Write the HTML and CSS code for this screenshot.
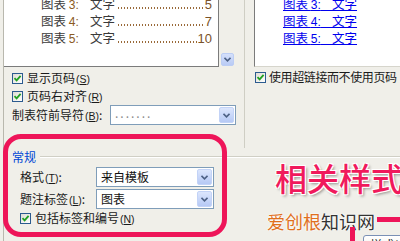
FILE: index.html
```html
<!DOCTYPE html>
<html lang="zh-CN">
<head>
<meta charset="utf-8">
<title>目录 - 图表目录</title>
<link rel="stylesheet" href="styles.css">
</head>
<body>
<div class="dialog">
  <div class="top">
    <div class="left-col">
      <div class="print-row">
        <div class="print-preview">
          <div class="lines">
            <div class="toc-line"><span class="cap">图表 <i>3:</i>&nbsp;&nbsp;&nbsp;&nbsp;文字</span><span class="dots"></span><span class="pg">5</span></div>
            <div class="toc-line"><span class="cap">图表 <i>4:</i>&nbsp;&nbsp;&nbsp;&nbsp;文字</span><span class="dots"></span><span class="pg">7</span></div>
            <div class="toc-line"><span class="cap">图表 <i>5:</i>&nbsp;&nbsp;&nbsp;&nbsp;文字</span><span class="dots"></span><span class="pg">10</span></div>
          </div>
        </div>
        <div class="vscroll">
          <div class="scroll-btn"><svg width="7" height="5" viewBox="0 0 7 5"><path d="M0.5 0.8 L3.5 3.8 L6.5 0.8" fill="none" stroke="#4d6185" stroke-width="1.6"/></svg></div>
        </div>
      </div>
      <div class="chk-row first"><span class="chk"><svg width="9" height="9" viewBox="0 0 9 9"><path d="M1.5 4.2 L3.6 6.4 L7.6 1.8" fill="none" stroke="#21a121" stroke-width="1.8"/></svg></span><span>显示页码<small>(<u>S</u>)</small></span></div>
      <div class="chk-row"><span class="chk"><svg width="9" height="9" viewBox="0 0 9 9"><path d="M1.5 4.2 L3.6 6.4 L7.6 1.8" fill="none" stroke="#21a121" stroke-width="1.8"/></svg></span><span>页码右对齐<small>(<u>R</u>)</small></span></div>
      <div class="field-row leader">
        <span class="lbl">制表符前导符<small>(<u>B</u>)</small>:</span>
        <div class="combo wide"><span class="val dotted">.......</span><span class="combo-btn"><svg width="7" height="5" viewBox="0 0 7 5"><path d="M0.5 0.8 L3.5 3.8 L6.5 0.8" fill="none" stroke="#4d6185" stroke-width="1.6"/></svg></span></div>
      </div>
    </div>
    <div class="right-col">
      <div class="web-preview">
        <div class="lines">
          <div class="web-line"><a>图表 <i>3:</i>&nbsp;&nbsp;&nbsp;&nbsp;文字</a></div>
          <div class="web-line"><a>图表 <i>4:</i>&nbsp;&nbsp;&nbsp;&nbsp;文字</a></div>
          <div class="web-line"><a>图表 <i>5:</i>&nbsp;&nbsp;&nbsp;&nbsp;文字</a></div>
        </div>
      </div>
      <div class="chk-row web"><span class="chk"><svg width="9" height="9" viewBox="0 0 9 9"><path d="M1.5 4.2 L3.6 6.4 L7.6 1.8" fill="none" stroke="#21a121" stroke-width="1.8"/></svg></span><span class="tight">使用超链接而不使用页码</span></div>
    </div>
  </div>
  <div class="general">
    <div class="group-title"><span class="gt">常规</span><span class="rule"></span></div>
    <div class="field-row r1">
      <span class="lbl short">格式<small>(<u>T</u>)</small>:</span>
      <div class="combo"><span class="val">来自模板</span><span class="combo-btn"><svg width="7" height="5" viewBox="0 0 7 5"><path d="M0.5 0.8 L3.5 3.8 L6.5 0.8" fill="none" stroke="#4d6185" stroke-width="1.6"/></svg></span></div>
    </div>
    <div class="field-row r2">
      <span class="lbl short">题注标签<small>(<u>L</u>)</small>:</span>
      <div class="combo"><span class="val">图表</span><span class="combo-btn"><svg width="7" height="5" viewBox="0 0 7 5"><path d="M0.5 0.8 L3.5 3.8 L6.5 0.8" fill="none" stroke="#4d6185" stroke-width="1.6"/></svg></span></div>
    </div>
    <div class="chk-row inc"><span class="chk"><svg width="9" height="9" viewBox="0 0 9 9"><path d="M1.5 4.2 L3.6 6.4 L7.6 1.8" fill="none" stroke="#21a121" stroke-width="1.8"/></svg></span><span>包括标签和编号<small>(<u>N</u>)</small></span></div>
  </div>
</div>

<div class="highlight"></div>
<div class="callout">相关样式</div>
<div class="watermark"><span class="wm-a">爱创根</span><span class="wm-b">知识网</span></div>
<div class="pink-h"></div>
<div class="pink-v"></div>
<div class="btn-partial">样式(<u>S</u>)...</div>
</body>
</html>
```

FILE: styles.css
```css
html, body {
  margin: 0;
  padding: 0;
}
body {
  width: 400px;
  height: 241px;
  overflow: hidden;
  position: relative;
  background: #f0efe9;
  font-family: "Noto Sans CJK SC", "Noto Sans", sans-serif;
  font-size: 12px;
  line-height: 16px;
  color: #1a1a1a;
}
small {
  font-size: 10.5px;
  font-family: "Liberation Sans", sans-serif;
  margin-left: 1px;
}
.dialog {
  margin-left: 3px;
  border-left: 1px solid #b9b8ae;
  height: 241px;
}
.top {
  display: flex;
  height: 148px;
}
.left-col {
  width: 240px;
  border-right: 1px solid #cfcec4;
}
.print-row {
  display: flex;
  height: 67px;
}
.print-preview {
  width: 214px;
  height: 66px;
  background: #fff;
  border-right: 1px solid #7b7b7b;
  border-bottom: 1px solid #7b7b7b;
  overflow: hidden;
}
.lines {
  margin-top: -4px;
}
.toc-line {
  display: flex;
  align-items: center;
  height: 17px;
  line-height: 15px;
  padding-left: 37px;
  padding-right: 6px;
  color: #3a3a3a;
  font-size: 12.5px;
}
.cap, .web-line a {
  white-space: nowrap;
}
.toc-line i, .web-line i {
  font-style: normal;
  font-family: "Liberation Sans", sans-serif;
  font-size: 12px;
}
.toc-line i {
  color: #8a5a22;
}
.dots {
  flex: 1;
  margin: 0 1px 0 2px;
  align-self: flex-end;
  margin-bottom: 4px;
  background-image: radial-gradient(circle, #9a6a3a 0.7px, transparent 0.9px);
  background-size: 3px 2px;
  background-repeat: repeat-x;
  height: 2px;
}
.pg {
  color: #7a5228;
  font-family: "Liberation Sans", sans-serif;
  font-size: 13px;
}
.vscroll {
  width: 16px;
  display: flex;
  flex-direction: column;
  justify-content: flex-end;
  padding-bottom: 1px;
}
.scroll-btn {
  width: 13px;
  height: 13px;
  margin-left: 2px;
  box-sizing: border-box;
  border: 1px solid #bccdf4;
  border-radius: 2px;
  background: linear-gradient(#d5e0fb, #b9cbf5);
  display: flex;
  align-items: center;
  justify-content: center;
}
.chk-row {
  display: flex;
  align-items: center;
  height: 18px;
  padding-left: 8px;
  gap: 4px;
  white-space: nowrap;
}
.chk-row.first {
  margin-top: 2px;
}
.chk {
  width: 11px;
  height: 11px;
  box-sizing: border-box;
  border: 1px solid #2c5b8f;
  background: linear-gradient(135deg, #dedcd4, #fff);
  display: flex;
  align-items: center;
  justify-content: center;
  flex: none;
}
.field-row {
  display: flex;
  align-items: center;
  white-space: nowrap;
}
.field-row.leader {
  height: 20px;
  padding-left: 8px;
}
.lbl {
  width: 98px;
  flex: none;
}
.lbl.short {
  width: 76px;
}
.combo {
  width: 118px;
  height: 20px;
  box-sizing: border-box;
  border: 1px solid #7f9db9;
  background: #fff;
  display: flex;
  align-items: center;
  justify-content: space-between;
  padding: 1px;
}
.combo.wide {
  width: 126px;
}
.val {
  padding-left: 3px;
  color: #111;
}
.val.dotted {
  color: #8a8a8a;
  letter-spacing: 2px;
  line-height: 1;
  margin-top: -4px;
}
.combo-btn {
  width: 15px;
  height: 16px;
  box-sizing: border-box;
  border: 1px solid #c3d3f7;
  border-radius: 2px;
  background: linear-gradient(#dce6fd, #b6c9f5);
  display: flex;
  align-items: center;
  justify-content: center;
}
.right-col {
  flex: 1;
}
.web-preview {
  margin-left: 9px;
  height: 66px;
  background: #fff;
  border-left: 1px solid #7b7b7b;
  border-bottom: 1px solid #d6d5cc;
  overflow: hidden;
}
.web-line {
  height: 17px;
  line-height: 15px;
  display: flex;
  align-items: center;
  padding-left: 28px;
  font-size: 12.5px;
}
.web-line a {
  color: #0000ee;
  text-decoration: underline;
  text-underline-offset: 1px;
}
.chk-row.web {
  padding-left: 10px;
  margin-top: 0;
  height: 20px;
  gap: 3px;
}
.tight {
  letter-spacing: -0.4px;
}
.general {
  display: flex;
  flex-direction: column;
}
.group-title {
  display: flex;
  align-items: center;
  height: 17px;
  padding-left: 8px;
}
.gt {
  color: #0046d5;
}
.rule {
  flex: 1;
  height: 0;
  border-top: 1px solid #d0cfc5;
  border-bottom: 1px solid #fff;
  margin-left: 4px;
}
.field-row.r1 {
  margin-top: 2px;
  padding-left: 16px;
}
.field-row.r2 {
  margin-top: 2px;
  padding-left: 16px;
}
.chk-row.inc {
  padding-left: 16px;
  height: 19px;
}

/* overlays */
.highlight {
  position: absolute;
  left: 3px;
  top: 134px;
  width: 224px;
  height: 103px;
  box-sizing: border-box;
  border: 5px solid #ee1559;
  border-radius: 18px;
}
.callout {
  position: absolute;
  left: 275px;
  top: 156px;
  font-size: 32px;
  line-height: 42px;
  font-weight: 500;
  color: #f01a5c;
  white-space: nowrap;
  text-shadow: -1px -1px 0 #fff, 1px -1px 0 #fff, -1px 1px 0 #fff, 1px 1px 0 #fff, 2px 2px 3px rgba(0,0,0,0.4);
}
.watermark {
  position: absolute;
  left: 267px;
  top: 208px;
  font-size: 18px;
  line-height: 26px;
  white-space: nowrap;
  text-shadow: 0 0 2px #fff, 0 0 2px #fff;
}
.wm-a {
  color: #e0701e;
}
.wm-b {
  color: #333;
}
.pink-h {
  position: absolute;
  left: 377px;
  top: 217px;
  width: 23px;
  height: 5px;
  background: #ee1559;
}
.pink-v {
  position: absolute;
  left: 350px;
  top: 227px;
  width: 5px;
  height: 14px;
  background: #ee1559;
}
.btn-partial {
  position: absolute;
  left: 363px;
  top: 235px;
  width: 70px;
  height: 22px;
  box-sizing: border-box;
  border: 1px solid #7a90b5;
  border-radius: 3px;
  background: linear-gradient(#fff, #ece9e0);
  padding: 1px 0 0 6px;
  font-size: 12px;
  white-space: nowrap;
}
```
